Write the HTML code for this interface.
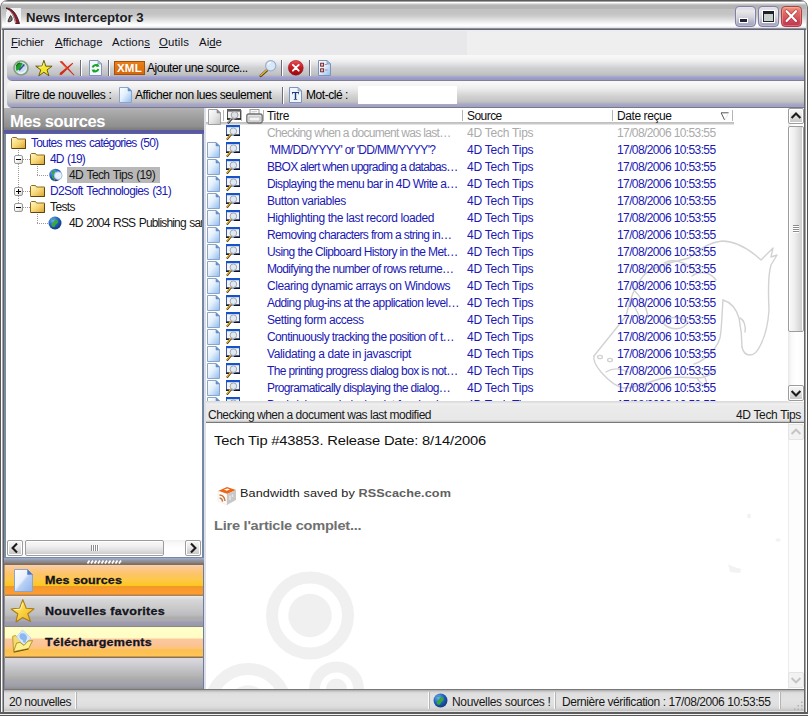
<!DOCTYPE html>
<html><head><meta charset="utf-8">
<style>
*{box-sizing:border-box;margin:0;padding:0}
html,body{width:808px;height:716px;overflow:hidden;background:#ffffff;font-family:"Liberation Sans",sans-serif;font-size:12px;color:#000}
.a{position:absolute}
.t{position:absolute;white-space:nowrap;line-height:14px}
.i{position:absolute;overflow:visible}
#win{position:absolute;left:0;top:0;width:808px;height:716px;overflow:hidden;background:#ececec;border-radius:7px 7px 0 0}
#title{left:0;top:0;width:808px;height:31px;border-radius:7px 7px 0 0;border-left:1px solid #6a6a6a;border-right:1px solid #6a6a6a;box-shadow:inset 1px 0 0 #c8c8c8,inset -1px 0 0 #c8c8c8;
 background:linear-gradient(#5c5c5c 0,#5c5c5c 1px,#a0a0a0 1.5px,#ffffff 2.5px,#e0e0e0 3.5px,#c4c4c4 4.5px,#b4b4b4 5.5px,#b4b4b4 8.5px,#c2c2c2 9.5px,#c4c4c4 14px,#cccccc 16px,#dcdcdc 19px,#eeeeee 22px,#fafafa 24px,#ffffff 26px,#e4e4ea 27.5px,#a0a0a8 28.3px,#66666e 29px,#66666e 30px,#ececfa 30px)}
#menubar{left:4px;top:30px;width:800px;height:25px;background:linear-gradient(#ececfa 0,#efefef 2px,#efefef 100%)}
#menul{left:5px;top:31px;width:462px;height:24px;background:#e8e8ea}
.tb{left:7px;width:797px;border-radius:5px 0 0 5px}
#tb1{top:55px;height:26px;background:linear-gradient(#f8f8f8 0,#f6f6f6 3px,#eeeeee 6px,#e2e2e6 9px,#d8d8e0 11px,#d0d0c8 13px,#c8c8d4 16px,#c0c4bc 19px,#b8b8c0 20.5px,#a8a8d0 21.5px,#9c9cc8 23px,#9898c4 25px,#808090 25.5px,#808090 26px)}
#tb2{top:81px;height:27px;background:linear-gradient(#f8f8f8 0,#f6f6f6 3px,#eeeeee 7px,#e0e0e0 11px,#d2d2d2 15px,#c8c8c8 19px,#c0c0c4 21px,#b0b0c8 22.5px,#a4a4c4 24px,#a0a0c0 26px,#787888 26.3px,#787888 27px)}
.menu{top:35px;font-size:11.4px;color:#101020}
u{text-decoration:underline}
.sep{position:absolute;width:2px;height:16px;top:60px;background:linear-gradient(90deg,#6c6c80 0,#6c6c80 1px,#fff 1px)}
.bl{left:0;top:30px;width:4px;height:686px;background:linear-gradient(90deg,#5a5856 0,#5a5856 1px,#ffffff 1px,#ffffff 2px,#a6a6b0 2px,#a6a6b0 3px,#606068 3px)}
.br{left:804px;top:30px;width:4px;height:686px;background:linear-gradient(90deg,#666666 0,#666666 1px,#a8a8a8 1px,#a8a8a8 2px,#ffffff 2px,#ffffff 3px,#505050 3px)}
.bb{left:0;top:712px;width:808px;height:4px;background:linear-gradient(#5c5c5c 0,#5c5c5c 2px,#f4f4f4 2px,#f4f4f4 3px,#585858 3px)}
#lhead{left:4px;top:108px;width:200px;height:26px;background:linear-gradient(#b4b4b8 0,#aaaaaa 4px,#9a9a9a 12px,#8e8e8e 19px,#828282 20px,#808080 21.5px,#5a5aa0 22px,#5858a0 24px,#6060a8 26px)}
#tree{left:4px;top:134px;width:200px;height:424px;background:#fff;border:2px solid #7488a4;border-top:none;border-left-color:#7c8c98;border-bottom-width:1px;overflow:hidden}
#tree .t{color:#2018b4}
#tree .k{color:#181818}
.dv{position:absolute;width:1px;background:repeating-linear-gradient(#9a9a9a 0,#9a9a9a 1px,transparent 1px,transparent 2px)}
.dh{position:absolute;height:1px;background:repeating-linear-gradient(90deg,#9a9a9a 0,#9a9a9a 1px,transparent 1px,transparent 2px)}
#split{left:4px;top:558px;width:200px;height:7px;background:linear-gradient(#a0acc8 0,#98a0b8 1.5px,#9094a4 2.5px,#8c8c94 3.5px,#888484 4.5px,#847468 5.5px,#806858 7px)}
.nav{left:4px;width:200px;height:31px;border-right:1px solid #6c7c9c;border-left:1px solid #a89870}
#nav1{top:565px;background:linear-gradient(#f4d4b4 0,#f8cca0 1.5px,#fcc888 4px,#fcc468 9px,#fec850 14px,#fcc830 18px,#fcc820 20.5px,#f09828 21.5px,#f89a2c 24px,#ff9c30 29px,#b08050 30px,#a08868 31px)}
#nav2{top:596px;background:linear-gradient(#f0ece4 0,#e2e2e2 1.5px,#d6d6da 4px,#cecece 9px,#c4c4c6 15px,#bcbcc0 19px,#adadad 21.5px,#acacb0 24.5px,#a09cb4 26px,#9898a8 30px,#888888 30.5px)}
#nav3{top:627px;background:linear-gradient(#fffcc0 0,#ffffc8 2px,#fffcc4 11px,#fcc8a0 12px,#fcc498 17px,#fcc478 21.5px,#fcc050 23px,#ffc458 29px,#907040 30px,#807060 31px)}
#nav4{top:658px;height:31px;background:linear-gradient(#dcd8e0 0,#d4d4d8 4px,#c6c6ca 10px,#b6b6b6 17px,#a9a9a9 22px,#a2a2b0 26px,#9a9aa0 29px,#8c8c8c 31px)}
.navt{font-weight:bold;font-size:11.5px;color:#141420;left:45px;-webkit-text-stroke:0.3px #141420}
#list{left:204px;top:108px;width:600px;height:294px;background:#fff;border-left:2px solid #dcdfea;overflow:hidden}
#lh{position:absolute;left:0;top:0;width:528px;height:17px;background:linear-gradient(#fff 0,#fff 14.5px,#c0c0c0 14.5px,#c8c8c8 15.5px,#e4e4e4 16.5px,#fff 17px)}
#lh .t{top:1px;color:#101010}
#pvh{left:206px;top:401px;width:598px;height:22px;background:linear-gradient(#d8d8d8 0,#e2e2e2 1.5px,#f0f0f0 3px,#ebebeb 5px,#e8e8e8 19px,#c8c8c8 20.5px,#787878 21px,#787878 22px)}
#pv{left:204px;top:423px;width:600px;height:266px;background:#fff;border-left:2px solid #dcdfea;overflow:hidden}
#status{left:4px;top:689px;width:800px;height:23px;background:linear-gradient(#787878 0,#787878 1px,#b4b4b4 1.5px,#c8c8c8 2.5px,#d8d8d8 3.5px,#e0e0e0 5px,#e2e2e2 12px,#dedede 17px,#d4d4d4 19.5px,#c4c4c4 21.5px,#e4e4e4 22.5px)}
.row{position:absolute;left:0;height:17px;width:530px;color:#2018b4}
.row.rd{color:#aaaaaa}
.row span{position:absolute;top:1px;line-height:14px;white-space:nowrap}
.row .c1{left:61px}.row .c2{left:261px}.row .c3{left:411px}
.wb{position:absolute;top:6px;width:21px;height:21px;border-radius:4px;border:1px solid #8080a8;background:linear-gradient(#d8d8e0 0,#e8e8ec 4px,#d4d4dc 10px,#b4b4c8 15px,#9c9cbc 20px);box-shadow:inset 0 0 0 1px rgba(255,255,255,.25)}
.wc{border-color:#b04048;background:linear-gradient(#f0a088 0,#e47468 4px,#d8585c 10px,#cc4458 15px,#c03054 20px);box-shadow:inset 0 0 0 1px rgba(255,200,180,.35)}
.cs{position:absolute;top:2px;width:1px;height:11px;background:#b4b4b4}
.sb{position:absolute;width:16px;height:16px;border:1px solid #9c9c9c;border-radius:2px;background:linear-gradient(#fff 0,#fff 1px,#f4f4f4 1px,#ececec 5px,#d4d4d4 10px,#c8c8c8 13px,#fff 13px);box-shadow:inset 1px 0 0 #fff,inset -1px 0 0 #fff}
.sb svg{display:block}
.sd{border-color:#e4e4e4;background:#f2f2f2;box-shadow:none}
.ss{position:absolute;top:692px;width:2px;height:17px;background:linear-gradient(90deg,#fafafa 0,#fafafa 1px,#b4b4b4 1px)}
.eb{position:absolute;width:9px;height:9px;border:1px solid #989898;border-radius:2px;background:linear-gradient(135deg,#fff 0,#fff 40%,#d4d4d0 100%)}
.eb i{position:absolute;left:1px;top:3px;width:5px;height:1px;background:#000}
.eb b{position:absolute;left:3px;top:1px;width:1px;height:5px;background:#000}
#tree .t{word-spacing:1px}
#nav2,#nav4{border-left-color:#8c8c90}
.navt,#p1,#p2,#p3{transform:scaleX(1.09);transform-origin:0 0}

#ttl{letter-spacing:-0.028px}
#m1{letter-spacing:-0.172px}
#m2{letter-spacing:0.021px}
#m3{letter-spacing:0.089px}
#m4{letter-spacing:0.143px}
#m5{letter-spacing:0.043px}
#xml{letter-spacing:0.208px}
#ajout{letter-spacing:-0.478px}
#filtre{letter-spacing:-0.365px}
#affich{letter-spacing:-0.429px}
#motcle{letter-spacing:-0.446px}
#mes{letter-spacing:-0.452px}
#tr0{letter-spacing:-0.786px}
#tr1{letter-spacing:-0.859px}
#tr2{letter-spacing:-0.637px}
#tr3{letter-spacing:-0.647px}
#tr4{letter-spacing:-0.603px}
#tr5{letter-spacing:-0.831px}
#n1{letter-spacing:0.087px}
#n2{letter-spacing:0.243px}
#n3{letter-spacing:0.237px}
#h1{letter-spacing:-0.312px}
#h2{letter-spacing:-0.555px}
#h3{letter-spacing:-0.420px}
#pvt{letter-spacing:-0.487px}
#pvs{letter-spacing:-0.346px}
#p1{letter-spacing:-0.160px}
#p2{letter-spacing:0.090px}
#p3{letter-spacing:-0.229px}
#s1{letter-spacing:-0.449px}
#s2{letter-spacing:-0.327px}
#s3{letter-spacing:-0.424px}
.row .c2{letter-spacing:-0.230px}
.row .c3{letter-spacing:-0.611px}

</style></head><body>
<svg width="0" height="0" style="position:absolute">
<defs>
<linearGradient id="gdoc" x1="0" y1="0" x2="1" y2="1"><stop offset="0" stop-color="#ffffff"/><stop offset="0.45" stop-color="#e4f0fc"/><stop offset="1" stop-color="#8cbcf0"/></linearGradient>
<linearGradient id="gdocg" x1="0" y1="0" x2="1" y2="1"><stop offset="0" stop-color="#ffffff"/><stop offset="0.5" stop-color="#e8e8e8"/><stop offset="1" stop-color="#c0c0c0"/></linearGradient>
<linearGradient id="gfold" x1="0" y1="0" x2="1" y2="1"><stop offset="0" stop-color="#fff8c8"/><stop offset="0.5" stop-color="#f8d878"/><stop offset="1" stop-color="#d8a030"/></linearGradient>
<radialGradient id="gglobe" cx="0.35" cy="0.3" r="0.8"><stop offset="0" stop-color="#70b0f0"/><stop offset="0.5" stop-color="#2060c0"/><stop offset="1" stop-color="#103070"/></radialGradient>
</defs></svg>

<div id="win">
<div id="title" class="a"></div>
<div class="t" id="ttl" style="left:26px;top:10px;font-size:13.2px;line-height:16px;color:#1c1c24;font-weight:bold">News Interceptor 3</div>
<div id="menubar" class="a"></div><div id="menul" class="a"></div>
<div class="t menu" id="m1" style="left:11px"><u>F</u>ichier</div>
<div class="t menu" id="m2" style="left:55px"><u>A</u>ffichage</div>
<div class="t menu" id="m3" style="left:112px">Action<u>s</u></div>
<div class="t menu" id="m4" style="left:159px"><u>O</u>utils</div>
<div class="t menu" id="m5" style="left:199px">Ai<u>d</u>e</div>
<div id="tb1" class="a tb"></div>
<div id="tb2" class="a tb"></div>
<div class="sep" style="left:80px"></div><div class="sep" style="left:108px"></div><div class="sep" style="left:281px"></div><div class="sep" style="left:309px"></div>
<div class="a" style="left:114px;top:61px;width:31px;height:14px;background:linear-gradient(#e88018,#d86808);border:1px solid #a85008"></div>
<div class="t" id="xml" style="left:117px;top:61px;font-size:11.5px;font-weight:bold;color:#fff;letter-spacing:0.2px">XML</div>
<div class="t" id="ajout" style="left:147px;top:61px">Ajouter une source...</div>
<div class="t" id="filtre" style="left:15px;top:88px">Filtre de nouvelles :</div>
<svg class="i" style="left:119px;top:87px" width="13" height="16" viewBox="0 0 13 16"><path d="M0.5,0.5H9L12.5,4V15.5H0.5Z" fill="url(#gdoc)" stroke="#8ca4c8"/><path d="M9,0.5V4H12.5Z" fill="#5c8cd4" stroke="#6c90c8" stroke-width="0.6"/></svg>
<div class="t" id="affich" style="left:135px;top:88px">Afficher non lues seulement</div>
<div class="sep" style="left:282px;top:87px;height:17px"></div>
<div class="t" id="motcle" style="left:306px;top:88px">Mot-clé :</div>
<div class="a" style="left:358px;top:86px;width:99px;height:18px;background:#fff"></div>

<!-- toolbar icons -->
<svg class="i" style="left:13px;top:60px" width="16" height="16" viewBox="0 0 16 16">
 <circle cx="8" cy="8" r="7" fill="#dfe9df" stroke="#84a088" stroke-width="1.7"/>
 <circle cx="8" cy="8" r="5.2" fill="#c8dcf2"/>
 <path d="M8,2.8A5.2,5.2 0 0 0 3.6,11 L7.4,8.4 L9.6,3.1Z" fill="#1ca024"/>
 <path d="M3.4,6.4A5,5 0 0 1 7.2,2.9" stroke="#0c7014" stroke-width="1.3" fill="none"/>
 <path d="M6.2,10.2L10.8,5" stroke="#34488c" stroke-width="1.5"/><path d="M9.2,4.6L11.6,4.2L11.2,6.6Z" fill="#34488c"/>
 <path d="M5.4,12.4A5.2,5.2 0 0 0 12.8,9.6" stroke="#eef4fc" stroke-width="1.3" fill="none"/>
</svg>
<svg class="i" style="left:35px;top:59px" width="18" height="18" viewBox="35 59 18 18">
 <path d="M43.9,60.3L45.8,66.2L52.1,66.2L47.0,69.9L49.0,75.9L43.9,72.2L38.8,75.9L40.8,69.9L35.7,66.2L42.0,66.2Z" fill="#f4e630" stroke="#6c5c08" stroke-width="1" stroke-linejoin="round"/>
 <path d="M43.8,63.2L42.6,66.9L38.8,67.1" fill="none" stroke="#fcfcb0" stroke-width="0.8"/></svg>
<svg class="i" style="left:58px;top:60px" width="18" height="17" viewBox="0 0 18 17">
 <path d="M1.5,1.5L4,1L16.5,15L15.8,15.6Z" fill="#d42c14"/>
 <path d="M14.5,2.8L15.2,3.6L3.5,15L1.5,14.8L2,12.8Z" fill="#d42c14"/>
 <path d="M2.5,2L9,8.5" stroke="#f07030" stroke-width="0.8"/>
</svg>
<svg class="i" style="left:89px;top:60px" width="13" height="16" viewBox="0 0 13 16">
 <path d="M0.5,0.5H9L12.5,4V15.5H0.5Z" fill="#f4f8fc" stroke="#8494b4"/><path d="M9,0.5V4H12.5Z" fill="#b8c8e4" stroke="#8494b4" stroke-width="0.7"/>
 <path d="M9.2,6A3.4,3.4 0 0 0 3.6,7.6" stroke="#18a428" stroke-width="2" fill="none"/><path d="M8,3.4L10.6,6.6L7,6.8Z" fill="#18a428"/>
 <path d="M3.8,10.4A3.4,3.4 0 0 0 9.4,9" stroke="#18a428" stroke-width="2" fill="none"/><path d="M5,13L2.4,9.8L6,9.6Z" fill="#18a428"/>
</svg>
<svg class="i" style="left:259px;top:59px" width="18" height="18" viewBox="259 59 18 18">
 <path d="M267,70.2L260.8,75.8" stroke="#5c4818" stroke-width="2.6" stroke-linecap="round"/>
 <path d="M267,69.8L260.8,75.2" stroke="#e4b038" stroke-width="1.5" stroke-linecap="round"/>
 <circle cx="270.7" cy="65.8" r="5.1" fill="#d8e8f8" stroke="#9cb0cc" stroke-width="1.2"/>
 <path d="M267.8,64.6A3.2,3.2 0 0 1 271,62.4" stroke="#fff" stroke-width="1.2" fill="none"/>
</svg>
<svg class="i" style="left:288px;top:60px" width="16" height="16" viewBox="0 0 16 16">
 <defs><linearGradient id="gstop" x1="0" y1="0" x2="0" y2="1"><stop offset="0" stop-color="#ec5058"/><stop offset="0.5" stop-color="#c81820"/><stop offset="1" stop-color="#98080c"/></linearGradient></defs>
 <circle cx="7.8" cy="7.8" r="7.4" fill="url(#gstop)" stroke="#8c1418" stroke-width="0.6"/>
 <path d="M4.9,4.9L10.7,10.7M10.7,4.9L4.9,10.7" stroke="#fff" stroke-width="1.9" stroke-linecap="round"/>
</svg>
<svg class="i" style="left:318px;top:60px" width="13" height="16" viewBox="0 0 13 16">
 <path d="M0.5,0.5H9L12.5,4V15.5H0.5Z" fill="url(#gdoc)" stroke="#7c94b8"/><path d="M9,0.5V4H12.5Z" fill="#a8c4ec" stroke="#7c94b8" stroke-width="0.7"/>
 <rect x="2.6" y="3.2" width="3" height="3" fill="#e0c0c4" stroke="#702028" stroke-width="0.9"/><rect x="2.6" y="8.8" width="3" height="3" fill="#e0c0c4" stroke="#702028" stroke-width="0.9"/>
 <path d="M6.8,4.5H9M6.8,10H9.6" stroke="#c08890" stroke-width="1.2"/>
</svg>
<!-- T icon -->
<svg class="i" style="left:289px;top:87px" width="13" height="16" viewBox="0 0 13 16">
 <path d="M0.5,0.5H9L12.5,4V15.5H0.5Z" fill="#f0f6fc" stroke="#7c94b8"/><path d="M9,0.5V4H12.5Z" fill="#b8cce8" stroke="#7c94b8" stroke-width="0.7"/>
 <path d="M3,5H10V7.2H9.3V6H7.2V12H8.2V12.8H4.8V12H5.8V6H3.7V7.2H3Z" fill="#1c3c84"/>
</svg>
<!-- app icon -->
<svg class="i" style="left:5px;top:7px" width="17" height="17" viewBox="0 0 17 17">
 <path d="M3,1H16V16H1V6Z" fill="#fafafa" opacity="0.85"/>
 <path d="M1,1C7,1 11.5,6 14.5,16.5H10.6C9.6,10 6.5,3.6 1,1Z" fill="#8c1c2c" stroke="#280c10" stroke-width="0.8"/>
 <path d="M4,3.6C7.5,5.8 9.6,10 10.8,16" stroke="#e8d8d8" stroke-width="0.7" fill="none"/>
 <path d="M3,14.6C3.4,12 4.6,10.4 5.6,8.6C6.4,9.6 7.6,11 7,13C6.4,14.6 4.6,15 3,14.6Z" fill="#787070" stroke="#282424" stroke-width="0.9"/>
</svg>
<!-- window buttons -->
<div class="wb" style="left:735px"></div><div class="wb" style="left:758px"></div>
<div class="wb wc" style="left:781px"></div>
<div class="a" style="left:739px;top:18px;width:9px;height:5px;background:#fff"></div><div class="a" style="left:740px;top:19px;width:7px;height:3px;background:#20203c"></div>
<div class="a" style="left:762px;top:10px;width:13px;height:13px;background:#fff"></div><div class="a" style="left:763px;top:11px;width:11px;height:11px;background:#c8d0cc;border:1px solid #20202c;border-top-width:3px"></div>
<svg class="i" style="left:781px;top:6px" width="21" height="21" viewBox="0 0 21 21"><path d="M5.6,5.2L15,15M15,5.2L5.6,15" stroke="#8c2030" stroke-opacity="0.55" stroke-width="3.6" stroke-linecap="round"/><path d="M5.6,5.2L15,15M15,5.2L5.6,15" stroke="#fff" stroke-width="2.2" stroke-linecap="round"/></svg>

<div id="lhead" class="a"></div>
<div class="t" id="mes" style="left:10px;top:112px;font-size:16.5px;line-height:19px;font-weight:bold;color:#fff">Mes sources</div>
<div id="tree" class="a">
 <svg class="i" style="left:5px;top:3px" width="15" height="12" viewBox="0 0 15 12"><path d="M0.5,11.5V1.5L1.5,0.5H5.5L6.5,2H14.5V11.5Z" fill="url(#gfold)" stroke="#8c6a20"/><path d="M1,11.5H14.5V3" stroke="#5c4410" stroke-width="1" fill="none"/></svg>
 <div class="t" id="tr0" style="left:25px;top:2px">Toutes mes catégories (50)</div>
 <div class="dv" style="left:12px;top:16px;height:58px"></div>
 <div class="dh" style="left:17px;top:25px;width:7px"></div>
 <div class="dh" style="left:17px;top:57px;width:7px"></div>
 <div class="dh" style="left:17px;top:73px;width:7px"></div>
 <div class="dv" style="left:31px;top:32px;height:10px"></div><div class="dh" style="left:31px;top:41px;width:12px"></div>
 <div class="dv" style="left:31px;top:80px;height:10px"></div><div class="dh" style="left:31px;top:89px;width:12px"></div>

 <div class="eb" style="left:8px;top:21px"><i></i></div>
 <div class="eb" style="left:8px;top:53px"><i></i><b></b></div>
 <div class="eb" style="left:8px;top:69px"><i></i></div>
 <svg class="i" style="left:24px;top:19px" width="15" height="12" viewBox="0 0 15 12"><path d="M0.5,11.5V1.5L1.5,0.5H5.5L6.5,2H14.5V11.5Z" fill="url(#gfold)" stroke="#8c6a20"/><path d="M1,11.5H14.5V3" stroke="#5c4410" stroke-width="1" fill="none"/></svg>
 <div class="t" id="tr1" style="left:44px;top:18px">4D (19)</div>
 <svg class="i" style="left:43px;top:34px" width="14" height="14" viewBox="0 0 14 14"><circle cx="6.5" cy="7" r="6.2" fill="url(#gglobe)"/><path d="M2.5,3.5C4.5,2 6.5,3 6,5C5.5,7 3.5,6.5 3,8.5C2.5,10 4,11.5 5.5,11" fill="#38a838"/><circle cx="9.2" cy="7.6" r="3.9" fill="#e4f0fc" stroke="#a8c0e0" stroke-width="1"/><path d="M6.4,10.6L4.4,13" stroke="#708090" stroke-width="1.4"/></svg>
 <div class="a" style="left:61px;top:33px;width:93px;height:16px;background:#b8b8b8"></div>
 <div class="t k" id="tr2" style="left:63px;top:34px">4D Tech Tips (19)</div>
 <svg class="i" style="left:24px;top:51px" width="15" height="12" viewBox="0 0 15 12"><path d="M0.5,11.5V1.5L1.5,0.5H5.5L6.5,2H14.5V11.5Z" fill="url(#gfold)" stroke="#8c6a20"/><path d="M1,11.5H14.5V3" stroke="#5c4410" stroke-width="1" fill="none"/></svg>
 <div class="t" id="tr3" style="left:44px;top:50px">D2Soft Technologies (31)</div>
 <svg class="i" style="left:24px;top:67px" width="15" height="12" viewBox="0 0 15 12"><path d="M0.5,11.5V1.5L1.5,0.5H5.5L6.5,2H14.5V11.5Z" fill="url(#gfold)" stroke="#8c6a20"/><path d="M1,11.5H14.5V3" stroke="#5c4410" stroke-width="1" fill="none"/></svg>
 <div class="t k" id="tr4" style="left:44px;top:66px">Tests</div>
 <svg class="i" style="left:42px;top:82px" width="14" height="14" viewBox="0 0 14 14"><circle cx="7" cy="7" r="6.5" fill="url(#gglobe)"/><path d="M3,3.5C5,2 7,3 6.5,5C6,7 4,6.5 3.5,8.5C3,10 4.5,11.5 6,11C7.5,10.5 7,8.5 8.5,8C10,7.5 10.5,5.5 9.5,4" fill="#38a838" stroke="none"/></svg>
 <div class="t k" id="tr5" style="left:63px;top:82px">4D 2004 RSS Publishing sample</div>
</div>
<div id="split" class="a"></div>
<div id="nav1" class="a nav"></div>
<div id="nav2" class="a nav"></div>
<div id="nav3" class="a nav"></div>
<div id="nav4" class="a nav"></div>
<div class="t navt" id="n1" style="top:573px">Mes sources</div>
<div class="t navt" id="n2" style="top:604px">Nouvelles favorites</div>
<div class="t navt" id="n3" style="top:635px">Téléchargements</div>

<div id="list" class="a">
 <div id="lh">
  <svg class="i" style="left:2px;top:1px" width="13" height="16" viewBox="0 0 13 16"><path d="M0.5,0.5H9L12.5,4V15.5H0.5Z" fill="url(#gdocg)" stroke="#a0a0a0"/><path d="M9,0.5V4H12.5Z" fill="#909090" stroke="#888" stroke-width="0.6"/></svg>
  <svg class="i" style="left:21px;top:1px" width="15" height="16" viewBox="0 0 15 16"><rect x="0.5" y="0.5" width="13" height="9.5" fill="#eeeeee" stroke="#505050"/><rect x="0" y="0" width="14" height="2.6" fill="#606060"/><path d="M0,10H3.5M7.5,10H14" stroke="#202020" stroke-width="1.6"/><circle cx="7.6" cy="6" r="3.4" fill="#e0e0e4" stroke="#a0a0a8" stroke-width="1"/><path d="M4.8,9.6L0.8,14.4" stroke="#303030" stroke-width="2.2"/><path d="M4.6,9.2L0.8,13.6" stroke="#b0b0b0" stroke-width="1.2"/></svg>

  <svg class="i" style="left:40px;top:1px" width="17" height="15" viewBox="0 0 17 15">
   <rect x="4" y="0.5" width="9" height="6" fill="#fafafa" stroke="#9c9c9c"/><path d="M5.5,2.5H11M5.5,4.2H9" stroke="#c8c8c8" stroke-width="0.8"/>
   <rect x="0.8" y="5" width="15.4" height="9" rx="2" fill="#e4e4e4" stroke="#707070" stroke-width="1.3"/><rect x="3" y="8" width="11" height="4" fill="#f4f4f4" stroke="#b0b0b0" stroke-width="0.8"/>
  </svg>
  <div class="cs" style="left:17px"></div><div class="cs" style="left:35px"></div><div class="cs" style="left:57px"></div>
  <div class="cs" style="left:256px"></div><div class="cs" style="left:406px"></div><div class="cs" style="left:526px"></div>
  <svg class="i" style="left:514px;top:4px" width="10" height="9" viewBox="0 0 10 9"><path d="M1,0.8H8.6" stroke="#585858" stroke-width="1"/><path d="M1.2,1L4.6,8" stroke="#585858" stroke-width="1"/><path d="M8.4,1.2L5,8" stroke="#e8e8e8" stroke-width="1"/></svg>
  <div class="t" id="h1" style="left:61px">Titre</div>
  <div class="t" id="h2" style="left:261px">Source</div>
  <div class="t" id="h3" style="left:411px">Date reçue</div>
 </div>

 <svg class="i" style="left:0;top:0" width="598" height="294" viewBox="206 108 598 294" fill="none" stroke="#d2d2d2" stroke-width="1.4" stroke-linecap="round" stroke-linejoin="round">
  <path d="M594,356C600,348 615,330 626,316C630,300 634,286 645,274C655,266 672,262 689,258C700,248 712,242 722,241C734,241 748,248 761,260L773,248L771,257L777,255L771,265C768,275 768,290 769,310C768,325 765,336 761,344C758,351 754,355 750,355C746,355 743,352 742,347"/>
  <path d="M594,356C593,360 596,366 601,372C608,380 616,387 624,388C634,388 645,384 656,380C668,376 684,377 697,378C706,378 712,374 716,369"/>
  <path d="M723,300C730,302 736,308 739,318C741,328 742,338 742,347"/>
  <path d="M723,300C722,312 722,326 720,338C716,350 706,360 694,364"/>
  <path d="M664,263C672,258 684,262 693,268"/><path d="M692,276C700,270 710,272 716,280"/>
  <path d="M662,322C668,316 680,316 688,322C684,330 670,332 662,322Z"/>
  <path d="M634,290C640,296 646,306 648,316"/><path d="M628,300C634,304 638,312 640,320"/>
  <ellipse cx="600" cy="357" rx="2.4" ry="1.6"/><ellipse cx="610" cy="360" rx="2.4" ry="1.6"/>
  <path d="M606,372C612,368 620,368 628,372"/>
  <path d="M700,372C704,376 708,380 706,386C702,384 698,380 697,378"/>
  <path d="M740,318C744,320 746,326 745,332"/>
 </svg>
<div class="row rd" style="top:17px"><svg class="i" style="left:20px;top:0" width="15" height="16" viewBox="0 0 15 16"><rect x="0.5" y="0.5" width="13" height="9.5" fill="#f2f4f6" stroke="#3c58a4"/><rect x="0" y="0" width="14" height="2.2" fill="#1454c8"/><path d="M0,10.2H3.2M7.8,10.2H14" stroke="#101828" stroke-width="1.4"/><circle cx="7.4" cy="6.2" r="3.3" fill="#e0e8f2" stroke="#a0a8b4" stroke-width="1"/><path d="M5,9.4L0.9,14.6" stroke="#4a3a10" stroke-width="2"/><path d="M4.8,9.2L0.9,13.9" stroke="#f0b828" stroke-width="1.2"/></svg><span class="c1" id="r0" style="left:61px;letter-spacing:-0.685px">Checking when a document was last…</span><span class="c2">4D Tech Tips</span><span class="c3">17/08/2006 10:53:55</span></div>
<div class="row" style="top:34px"><svg class="i" style="left:1px;top:0" width="13" height="16" viewBox="0 0 13 16"><path d="M0.5,0.5H9L12.5,4V15.5H0.5Z" fill="url(#gdoc)" stroke="#8ca4c8"/><path d="M9,0.5V4H12.5Z" fill="#5c8cd4" stroke="#6c90c8" stroke-width="0.6"/></svg><svg class="i" style="left:20px;top:0" width="15" height="16" viewBox="0 0 15 16"><rect x="0.5" y="0.5" width="13" height="9.5" fill="#f2f4f6" stroke="#3c58a4"/><rect x="0" y="0" width="14" height="2.2" fill="#1454c8"/><path d="M0,10.2H3.2M7.8,10.2H14" stroke="#101828" stroke-width="1.4"/><circle cx="7.4" cy="6.2" r="3.3" fill="#e0e8f2" stroke="#a0a8b4" stroke-width="1"/><path d="M5,9.4L0.9,14.6" stroke="#4a3a10" stroke-width="2"/><path d="M4.8,9.2L0.9,13.9" stroke="#f0b828" stroke-width="1.2"/></svg><span class="c1" id="r1" style="left:63.5px;letter-spacing:-0.669px">'MM/DD/YYYY' or 'DD/MM/YYYY'?</span><span class="c2">4D Tech Tips</span><span class="c3">17/08/2006 10:53:55</span></div>
<div class="row" style="top:51px"><svg class="i" style="left:1px;top:0" width="13" height="16" viewBox="0 0 13 16"><path d="M0.5,0.5H9L12.5,4V15.5H0.5Z" fill="url(#gdoc)" stroke="#8ca4c8"/><path d="M9,0.5V4H12.5Z" fill="#5c8cd4" stroke="#6c90c8" stroke-width="0.6"/></svg><svg class="i" style="left:20px;top:0" width="15" height="16" viewBox="0 0 15 16"><rect x="0.5" y="0.5" width="13" height="9.5" fill="#f2f4f6" stroke="#3c58a4"/><rect x="0" y="0" width="14" height="2.2" fill="#1454c8"/><path d="M0,10.2H3.2M7.8,10.2H14" stroke="#101828" stroke-width="1.4"/><circle cx="7.4" cy="6.2" r="3.3" fill="#e0e8f2" stroke="#a0a8b4" stroke-width="1"/><path d="M5,9.4L0.9,14.6" stroke="#4a3a10" stroke-width="2"/><path d="M4.8,9.2L0.9,13.9" stroke="#f0b828" stroke-width="1.2"/></svg><span class="c1" id="r2" style="left:61px;letter-spacing:-0.728px">BBOX alert when upgrading a databas…</span><span class="c2">4D Tech Tips</span><span class="c3">17/08/2006 10:53:55</span></div>
<div class="row" style="top:68px"><svg class="i" style="left:1px;top:0" width="13" height="16" viewBox="0 0 13 16"><path d="M0.5,0.5H9L12.5,4V15.5H0.5Z" fill="url(#gdoc)" stroke="#8ca4c8"/><path d="M9,0.5V4H12.5Z" fill="#5c8cd4" stroke="#6c90c8" stroke-width="0.6"/></svg><svg class="i" style="left:20px;top:0" width="15" height="16" viewBox="0 0 15 16"><rect x="0.5" y="0.5" width="13" height="9.5" fill="#f2f4f6" stroke="#3c58a4"/><rect x="0" y="0" width="14" height="2.2" fill="#1454c8"/><path d="M0,10.2H3.2M7.8,10.2H14" stroke="#101828" stroke-width="1.4"/><circle cx="7.4" cy="6.2" r="3.3" fill="#e0e8f2" stroke="#a0a8b4" stroke-width="1"/><path d="M5,9.4L0.9,14.6" stroke="#4a3a10" stroke-width="2"/><path d="M4.8,9.2L0.9,13.9" stroke="#f0b828" stroke-width="1.2"/></svg><span class="c1" id="r3" style="left:61px;letter-spacing:-0.613px">Displaying the menu bar in 4D Write a…</span><span class="c2">4D Tech Tips</span><span class="c3">17/08/2006 10:53:55</span></div>
<div class="row" style="top:85px"><svg class="i" style="left:1px;top:0" width="13" height="16" viewBox="0 0 13 16"><path d="M0.5,0.5H9L12.5,4V15.5H0.5Z" fill="url(#gdoc)" stroke="#8ca4c8"/><path d="M9,0.5V4H12.5Z" fill="#5c8cd4" stroke="#6c90c8" stroke-width="0.6"/></svg><svg class="i" style="left:20px;top:0" width="15" height="16" viewBox="0 0 15 16"><rect x="0.5" y="0.5" width="13" height="9.5" fill="#f2f4f6" stroke="#3c58a4"/><rect x="0" y="0" width="14" height="2.2" fill="#1454c8"/><path d="M0,10.2H3.2M7.8,10.2H14" stroke="#101828" stroke-width="1.4"/><circle cx="7.4" cy="6.2" r="3.3" fill="#e0e8f2" stroke="#a0a8b4" stroke-width="1"/><path d="M5,9.4L0.9,14.6" stroke="#4a3a10" stroke-width="2"/><path d="M4.8,9.2L0.9,13.9" stroke="#f0b828" stroke-width="1.2"/></svg><span class="c1" id="r4" style="left:61px;letter-spacing:-0.460px">Button variables</span><span class="c2">4D Tech Tips</span><span class="c3">17/08/2006 10:53:55</span></div>
<div class="row" style="top:102px"><svg class="i" style="left:1px;top:0" width="13" height="16" viewBox="0 0 13 16"><path d="M0.5,0.5H9L12.5,4V15.5H0.5Z" fill="url(#gdoc)" stroke="#8ca4c8"/><path d="M9,0.5V4H12.5Z" fill="#5c8cd4" stroke="#6c90c8" stroke-width="0.6"/></svg><svg class="i" style="left:20px;top:0" width="15" height="16" viewBox="0 0 15 16"><rect x="0.5" y="0.5" width="13" height="9.5" fill="#f2f4f6" stroke="#3c58a4"/><rect x="0" y="0" width="14" height="2.2" fill="#1454c8"/><path d="M0,10.2H3.2M7.8,10.2H14" stroke="#101828" stroke-width="1.4"/><circle cx="7.4" cy="6.2" r="3.3" fill="#e0e8f2" stroke="#a0a8b4" stroke-width="1"/><path d="M5,9.4L0.9,14.6" stroke="#4a3a10" stroke-width="2"/><path d="M4.8,9.2L0.9,13.9" stroke="#f0b828" stroke-width="1.2"/></svg><span class="c1" id="r5" style="left:61px;letter-spacing:-0.413px">Highlighting the last record loaded</span><span class="c2">4D Tech Tips</span><span class="c3">17/08/2006 10:53:55</span></div>
<div class="row" style="top:119px"><svg class="i" style="left:1px;top:0" width="13" height="16" viewBox="0 0 13 16"><path d="M0.5,0.5H9L12.5,4V15.5H0.5Z" fill="url(#gdoc)" stroke="#8ca4c8"/><path d="M9,0.5V4H12.5Z" fill="#5c8cd4" stroke="#6c90c8" stroke-width="0.6"/></svg><svg class="i" style="left:20px;top:0" width="15" height="16" viewBox="0 0 15 16"><rect x="0.5" y="0.5" width="13" height="9.5" fill="#f2f4f6" stroke="#3c58a4"/><rect x="0" y="0" width="14" height="2.2" fill="#1454c8"/><path d="M0,10.2H3.2M7.8,10.2H14" stroke="#101828" stroke-width="1.4"/><circle cx="7.4" cy="6.2" r="3.3" fill="#e0e8f2" stroke="#a0a8b4" stroke-width="1"/><path d="M5,9.4L0.9,14.6" stroke="#4a3a10" stroke-width="2"/><path d="M4.8,9.2L0.9,13.9" stroke="#f0b828" stroke-width="1.2"/></svg><span class="c1" id="r6" style="left:61px;letter-spacing:-0.640px">Removing characters from a string in…</span><span class="c2">4D Tech Tips</span><span class="c3">17/08/2006 10:53:55</span></div>
<div class="row" style="top:136px"><svg class="i" style="left:1px;top:0" width="13" height="16" viewBox="0 0 13 16"><path d="M0.5,0.5H9L12.5,4V15.5H0.5Z" fill="url(#gdoc)" stroke="#8ca4c8"/><path d="M9,0.5V4H12.5Z" fill="#5c8cd4" stroke="#6c90c8" stroke-width="0.6"/></svg><svg class="i" style="left:20px;top:0" width="15" height="16" viewBox="0 0 15 16"><rect x="0.5" y="0.5" width="13" height="9.5" fill="#f2f4f6" stroke="#3c58a4"/><rect x="0" y="0" width="14" height="2.2" fill="#1454c8"/><path d="M0,10.2H3.2M7.8,10.2H14" stroke="#101828" stroke-width="1.4"/><circle cx="7.4" cy="6.2" r="3.3" fill="#e0e8f2" stroke="#a0a8b4" stroke-width="1"/><path d="M5,9.4L0.9,14.6" stroke="#4a3a10" stroke-width="2"/><path d="M4.8,9.2L0.9,13.9" stroke="#f0b828" stroke-width="1.2"/></svg><span class="c1" id="r7" style="left:61px;letter-spacing:-0.602px">Using the Clipboard History in the Met…</span><span class="c2">4D Tech Tips</span><span class="c3">17/08/2006 10:53:55</span></div>
<div class="row" style="top:153px"><svg class="i" style="left:1px;top:0" width="13" height="16" viewBox="0 0 13 16"><path d="M0.5,0.5H9L12.5,4V15.5H0.5Z" fill="url(#gdoc)" stroke="#8ca4c8"/><path d="M9,0.5V4H12.5Z" fill="#5c8cd4" stroke="#6c90c8" stroke-width="0.6"/></svg><svg class="i" style="left:20px;top:0" width="15" height="16" viewBox="0 0 15 16"><rect x="0.5" y="0.5" width="13" height="9.5" fill="#f2f4f6" stroke="#3c58a4"/><rect x="0" y="0" width="14" height="2.2" fill="#1454c8"/><path d="M0,10.2H3.2M7.8,10.2H14" stroke="#101828" stroke-width="1.4"/><circle cx="7.4" cy="6.2" r="3.3" fill="#e0e8f2" stroke="#a0a8b4" stroke-width="1"/><path d="M5,9.4L0.9,14.6" stroke="#4a3a10" stroke-width="2"/><path d="M4.8,9.2L0.9,13.9" stroke="#f0b828" stroke-width="1.2"/></svg><span class="c1" id="r8" style="left:61px;letter-spacing:-0.659px">Modifying the number of rows returne…</span><span class="c2">4D Tech Tips</span><span class="c3">17/08/2006 10:53:55</span></div>
<div class="row" style="top:170px"><svg class="i" style="left:1px;top:0" width="13" height="16" viewBox="0 0 13 16"><path d="M0.5,0.5H9L12.5,4V15.5H0.5Z" fill="url(#gdoc)" stroke="#8ca4c8"/><path d="M9,0.5V4H12.5Z" fill="#5c8cd4" stroke="#6c90c8" stroke-width="0.6"/></svg><svg class="i" style="left:20px;top:0" width="15" height="16" viewBox="0 0 15 16"><rect x="0.5" y="0.5" width="13" height="9.5" fill="#f2f4f6" stroke="#3c58a4"/><rect x="0" y="0" width="14" height="2.2" fill="#1454c8"/><path d="M0,10.2H3.2M7.8,10.2H14" stroke="#101828" stroke-width="1.4"/><circle cx="7.4" cy="6.2" r="3.3" fill="#e0e8f2" stroke="#a0a8b4" stroke-width="1"/><path d="M5,9.4L0.9,14.6" stroke="#4a3a10" stroke-width="2"/><path d="M4.8,9.2L0.9,13.9" stroke="#f0b828" stroke-width="1.2"/></svg><span class="c1" id="r9" style="left:61px;letter-spacing:-0.443px">Clearing dynamic arrays on Windows</span><span class="c2">4D Tech Tips</span><span class="c3">17/08/2006 10:53:55</span></div>
<div class="row" style="top:187px"><svg class="i" style="left:1px;top:0" width="13" height="16" viewBox="0 0 13 16"><path d="M0.5,0.5H9L12.5,4V15.5H0.5Z" fill="url(#gdoc)" stroke="#8ca4c8"/><path d="M9,0.5V4H12.5Z" fill="#5c8cd4" stroke="#6c90c8" stroke-width="0.6"/></svg><svg class="i" style="left:20px;top:0" width="15" height="16" viewBox="0 0 15 16"><rect x="0.5" y="0.5" width="13" height="9.5" fill="#f2f4f6" stroke="#3c58a4"/><rect x="0" y="0" width="14" height="2.2" fill="#1454c8"/><path d="M0,10.2H3.2M7.8,10.2H14" stroke="#101828" stroke-width="1.4"/><circle cx="7.4" cy="6.2" r="3.3" fill="#e0e8f2" stroke="#a0a8b4" stroke-width="1"/><path d="M5,9.4L0.9,14.6" stroke="#4a3a10" stroke-width="2"/><path d="M4.8,9.2L0.9,13.9" stroke="#f0b828" stroke-width="1.2"/></svg><span class="c1" id="r10" style="left:61px;letter-spacing:-0.605px">Adding plug-ins at the application level…</span><span class="c2">4D Tech Tips</span><span class="c3">17/08/2006 10:53:55</span></div>
<div class="row" style="top:204px"><svg class="i" style="left:1px;top:0" width="13" height="16" viewBox="0 0 13 16"><path d="M0.5,0.5H9L12.5,4V15.5H0.5Z" fill="url(#gdoc)" stroke="#8ca4c8"/><path d="M9,0.5V4H12.5Z" fill="#5c8cd4" stroke="#6c90c8" stroke-width="0.6"/></svg><svg class="i" style="left:20px;top:0" width="15" height="16" viewBox="0 0 15 16"><rect x="0.5" y="0.5" width="13" height="9.5" fill="#f2f4f6" stroke="#3c58a4"/><rect x="0" y="0" width="14" height="2.2" fill="#1454c8"/><path d="M0,10.2H3.2M7.8,10.2H14" stroke="#101828" stroke-width="1.4"/><circle cx="7.4" cy="6.2" r="3.3" fill="#e0e8f2" stroke="#a0a8b4" stroke-width="1"/><path d="M5,9.4L0.9,14.6" stroke="#4a3a10" stroke-width="2"/><path d="M4.8,9.2L0.9,13.9" stroke="#f0b828" stroke-width="1.2"/></svg><span class="c1" id="r11" style="left:61px;letter-spacing:-0.462px">Setting form access</span><span class="c2">4D Tech Tips</span><span class="c3">17/08/2006 10:53:55</span></div>
<div class="row" style="top:221px"><svg class="i" style="left:1px;top:0" width="13" height="16" viewBox="0 0 13 16"><path d="M0.5,0.5H9L12.5,4V15.5H0.5Z" fill="url(#gdoc)" stroke="#8ca4c8"/><path d="M9,0.5V4H12.5Z" fill="#5c8cd4" stroke="#6c90c8" stroke-width="0.6"/></svg><svg class="i" style="left:20px;top:0" width="15" height="16" viewBox="0 0 15 16"><rect x="0.5" y="0.5" width="13" height="9.5" fill="#f2f4f6" stroke="#3c58a4"/><rect x="0" y="0" width="14" height="2.2" fill="#1454c8"/><path d="M0,10.2H3.2M7.8,10.2H14" stroke="#101828" stroke-width="1.4"/><circle cx="7.4" cy="6.2" r="3.3" fill="#e0e8f2" stroke="#a0a8b4" stroke-width="1"/><path d="M5,9.4L0.9,14.6" stroke="#4a3a10" stroke-width="2"/><path d="M4.8,9.2L0.9,13.9" stroke="#f0b828" stroke-width="1.2"/></svg><span class="c1" id="r12" style="left:61px;letter-spacing:-0.611px">Continuously tracking the position of t…</span><span class="c2">4D Tech Tips</span><span class="c3">17/08/2006 10:53:55</span></div>
<div class="row" style="top:238px"><svg class="i" style="left:1px;top:0" width="13" height="16" viewBox="0 0 13 16"><path d="M0.5,0.5H9L12.5,4V15.5H0.5Z" fill="url(#gdoc)" stroke="#8ca4c8"/><path d="M9,0.5V4H12.5Z" fill="#5c8cd4" stroke="#6c90c8" stroke-width="0.6"/></svg><svg class="i" style="left:20px;top:0" width="15" height="16" viewBox="0 0 15 16"><rect x="0.5" y="0.5" width="13" height="9.5" fill="#f2f4f6" stroke="#3c58a4"/><rect x="0" y="0" width="14" height="2.2" fill="#1454c8"/><path d="M0,10.2H3.2M7.8,10.2H14" stroke="#101828" stroke-width="1.4"/><circle cx="7.4" cy="6.2" r="3.3" fill="#e0e8f2" stroke="#a0a8b4" stroke-width="1"/><path d="M5,9.4L0.9,14.6" stroke="#4a3a10" stroke-width="2"/><path d="M4.8,9.2L0.9,13.9" stroke="#f0b828" stroke-width="1.2"/></svg><span class="c1" id="r13" style="left:61px;letter-spacing:-0.361px">Validating a date in javascript</span><span class="c2">4D Tech Tips</span><span class="c3">17/08/2006 10:53:55</span></div>
<div class="row" style="top:255px"><svg class="i" style="left:1px;top:0" width="13" height="16" viewBox="0 0 13 16"><path d="M0.5,0.5H9L12.5,4V15.5H0.5Z" fill="url(#gdoc)" stroke="#8ca4c8"/><path d="M9,0.5V4H12.5Z" fill="#5c8cd4" stroke="#6c90c8" stroke-width="0.6"/></svg><svg class="i" style="left:20px;top:0" width="15" height="16" viewBox="0 0 15 16"><rect x="0.5" y="0.5" width="13" height="9.5" fill="#f2f4f6" stroke="#3c58a4"/><rect x="0" y="0" width="14" height="2.2" fill="#1454c8"/><path d="M0,10.2H3.2M7.8,10.2H14" stroke="#101828" stroke-width="1.4"/><circle cx="7.4" cy="6.2" r="3.3" fill="#e0e8f2" stroke="#a0a8b4" stroke-width="1"/><path d="M5,9.4L0.9,14.6" stroke="#4a3a10" stroke-width="2"/><path d="M4.8,9.2L0.9,13.9" stroke="#f0b828" stroke-width="1.2"/></svg><span class="c1" id="r14" style="left:61px;letter-spacing:-0.621px">The printing progress dialog box is not…</span><span class="c2">4D Tech Tips</span><span class="c3">17/08/2006 10:53:55</span></div>
<div class="row" style="top:272px"><svg class="i" style="left:1px;top:0" width="13" height="16" viewBox="0 0 13 16"><path d="M0.5,0.5H9L12.5,4V15.5H0.5Z" fill="url(#gdoc)" stroke="#8ca4c8"/><path d="M9,0.5V4H12.5Z" fill="#5c8cd4" stroke="#6c90c8" stroke-width="0.6"/></svg><svg class="i" style="left:20px;top:0" width="15" height="16" viewBox="0 0 15 16"><rect x="0.5" y="0.5" width="13" height="9.5" fill="#f2f4f6" stroke="#3c58a4"/><rect x="0" y="0" width="14" height="2.2" fill="#1454c8"/><path d="M0,10.2H3.2M7.8,10.2H14" stroke="#101828" stroke-width="1.4"/><circle cx="7.4" cy="6.2" r="3.3" fill="#e0e8f2" stroke="#a0a8b4" stroke-width="1"/><path d="M5,9.4L0.9,14.6" stroke="#4a3a10" stroke-width="2"/><path d="M4.8,9.2L0.9,13.9" stroke="#f0b828" stroke-width="1.2"/></svg><span class="c1" id="r15" style="left:61px;letter-spacing:-0.621px">Programatically displaying the dialog…</span><span class="c2">4D Tech Tips</span><span class="c3">17/08/2006 10:53:55</span></div>
<div class="row" style="top:289px"><svg class="i" style="left:1px;top:0" width="13" height="16" viewBox="0 0 13 16"><path d="M0.5,0.5H9L12.5,4V15.5H0.5Z" fill="url(#gdoc)" stroke="#8ca4c8"/><path d="M9,0.5V4H12.5Z" fill="#5c8cd4" stroke="#6c90c8" stroke-width="0.6"/></svg><svg class="i" style="left:20px;top:0" width="15" height="16" viewBox="0 0 15 16"><rect x="0.5" y="0.5" width="13" height="9.5" fill="#f2f4f6" stroke="#3c58a4"/><rect x="0" y="0" width="14" height="2.2" fill="#1454c8"/><path d="M0,10.2H3.2M7.8,10.2H14" stroke="#101828" stroke-width="1.4"/><circle cx="7.4" cy="6.2" r="3.3" fill="#e0e8f2" stroke="#a0a8b4" stroke-width="1"/><path d="M5,9.4L0.9,14.6" stroke="#4a3a10" stroke-width="2"/><path d="M4.8,9.2L0.9,13.9" stroke="#f0b828" stroke-width="1.2"/></svg><span class="c1" id="r16" style="left:61px;letter-spacing:-0.513px">Basic 'plug-and-play' script for check…</span><span class="c2">4D Tech Tips</span><span class="c3">17/08/2006 10:53:55</span></div>
</div>
<div class="a" style="left:204px;top:401px;width:2px;height:22px;background:#dcdfea"></div><div id="pvh" class="a"></div>
<div class="t" id="pvt" style="left:208px;top:408px;color:#181818">Checking when a document was last modified</div>
<div class="t" id="pvs" style="left:736px;top:408px;color:#181818">4D Tech Tips</div>
<div id="pv" class="a">

 <svg class="i" style="left:0;top:0" width="598" height="266" viewBox="206 423 598 266">
  <g fill="#f2f2f2"><ellipse cx="749" cy="516" rx="2" ry="2.4"/><ellipse cx="778" cy="540" rx="2.6" ry="1.8"/><path d="M728,564C731,566 734,567 741,569L740,573L730,572Z"/></g><g fill="#f0f0f0"><circle cx="310" cy="615.5" r="21.7"/><circle cx="336.5" cy="689" r="10.5"/><circle cx="248" cy="707" r="21.7"/></g>
  <g fill="none" stroke="#f0f0f0"><circle cx="310" cy="615.5" r="38" stroke-width="12"/><circle cx="248" cy="707" r="38" stroke-width="12"/><circle cx="336.5" cy="689" r="22" stroke-width="11"/></g>
 </svg>
 <div class="t" id="p1" style="left:8px;top:10px;font-size:13.5px;line-height:16px;color:#101010">Tech Tip #43853. Release Date: 8/14/2006</div>
 <div class="t" id="p2" style="left:34px;top:63px;font-size:11.6px;color:#202020">Bandwidth saved by <b style="color:#606060">RSScache.com</b></div>
 <div class="t" id="p3" style="left:8px;top:96px;font-size:13.4px;font-weight:bold;color:#707070">Lire l'article complet...</div>
</div>
<div id="status" class="a"></div>
<div class="t" id="s1" style="left:9px;top:695px;color:#181818">20 nouvelles</div>
<div class="t" id="s2" style="left:452px;top:695px;color:#181818">Nouvelles sources !</div>
<div class="t" id="s3" style="left:562px;top:695px;color:#181818">Dernière vérification : 17/08/2006 10:53:55</div>

<!-- list vscroll -->
<div class="a" style="left:788px;top:108px;width:16px;height:294px;background:linear-gradient(90deg,#e8e8e8 0,#f8f8f8 3px,#ffffff 8px,#fcfcfc 15px)"></div>
<div class="sb" style="left:788px;top:108px"><svg width="14" height="14" viewBox="0 0 14 14"><path d="M2.6,9L7,4.6L11.4,9" stroke="#1c1c1c" stroke-width="2.1" fill="none"/></svg></div>
<div class="sb" style="left:788px;top:385px"><svg width="14" height="14" viewBox="0 0 14 14"><path d="M2.6,5L7,9.4L11.4,5" stroke="#1c1c1c" stroke-width="2.1" fill="none"/></svg></div>

<div class="a" style="left:788px;top:126px;width:16px;height:206px;border:1px solid #9c9c9c;border-radius:2px;background:linear-gradient(90deg,#fff 0,#fff 1px,#f6f6f6 1px,#f0f0f0 5px,#dcdcdc 10px,#cccccc 13px,#fff 13px);"></div>
<div class="a" style="left:793px;top:225px;width:6px;height:8px;background:repeating-linear-gradient(#8c8c8c 0,#8c8c8c 1px,#fff 1px,#fff 2px)"></div>
<!-- preview vscroll (disabled) -->
<div class="a" style="left:788px;top:423px;width:16px;height:266px;background:#fdfdfd;border-left:1px solid #ececec"></div>
<div class="sb sd" style="left:788px;top:424px"><svg width="14" height="14" viewBox="0 0 14 14"><path d="M2.6,9L7,4.6L11.4,9" stroke="#c4c4c4" stroke-width="2" fill="none"/></svg></div>
<div class="sb sd" style="left:788px;top:672px"><svg width="14" height="14" viewBox="0 0 14 14"><path d="M2.6,5L7,9.4L11.4,5" stroke="#c4c4c4" stroke-width="2" fill="none"/></svg></div>
<!-- tree hscroll -->
<div class="a" style="left:6px;top:540px;width:196px;height:16px;background:linear-gradient(#f0f0f0 0,#fafafa 4px,#ffffff 10px,#fcfcfc 16px)"></div>
<div class="sb" style="left:7px;top:540px"><svg width="14" height="14" viewBox="0 0 14 14"><path d="M9,2.6L4.6,7L9,11.4" stroke="#1c1c1c" stroke-width="2.1" fill="none"/></svg></div>
<div class="sb" style="left:185px;top:540px"><svg width="14" height="14" viewBox="0 0 14 14"><path d="M5,2.6L9.4,7L5,11.4" stroke="#1c1c1c" stroke-width="2.1" fill="none"/></svg></div>
<div class="a" style="left:25px;top:540px;width:139px;height:16px;border:1px solid #9c9c9c;border-radius:2px;background:linear-gradient(#fff 0,#fff 1px,#f6f6f6 1px,#f0f0f0 5px,#dcdcdc 10px,#cccccc 13px,#fff 13px)"></div>
<div class="a" style="left:91px;top:545px;width:8px;height:6px;background:repeating-linear-gradient(90deg,#8c8c8c 0,#8c8c8c 1px,#fff 1px,#fff 2px)"></div>
<!-- splitter grip -->
<svg class="i" style="left:86px;top:560px" width="36" height="4" viewBox="0 0 36 4"><path d="M1.5,3.5L3.5,0.5M5,3.5L7,0.5M8.5,3.5L10.5,0.5M12,3.5L14,0.5M15.5,3.5L17.5,0.5M19,3.5L21,0.5M22.5,3.5L24.5,0.5M26,3.5L28,0.5M29.5,3.5L31.5,0.5M33,3.5L35,0.5" stroke="#fff" stroke-width="1.7"/></svg>
<!-- nav icons -->
<svg class="i" style="left:14px;top:569px" width="19" height="23" viewBox="0 0 19 23"><defs><linearGradient id="gdoc2" x1="0" y1="0" x2="1" y2="1"><stop offset="0" stop-color="#fff"/><stop offset="0.45" stop-color="#e8f0fc"/><stop offset="0.55" stop-color="#b8d0f4"/><stop offset="1" stop-color="#90b4ec"/></linearGradient></defs>
 <path d="M0.5,0.5H13.5L18.5,5.5V22.5H0.5Z" fill="url(#gdoc2)" stroke="#90a4c8"/><path d="M13.5,0.5V5.5H18.5Z" fill="#4c78c8" stroke="#6c8cc8" stroke-width="0.7"/></svg>
<svg class="i" style="left:10px;top:598px" width="25" height="26" viewBox="10 598 25 26"><defs><linearGradient id="gstar" x1="0" y1="0" x2="1" y2="1"><stop offset="0" stop-color="#fff08c"/><stop offset="0.45" stop-color="#fcd848"/><stop offset="1" stop-color="#eca81c"/></linearGradient></defs>
 <path d="M22.8,599.6C23.8,602 25.2,605.6 26.2,608.2C28.6,608.3 31.6,608.5 34,608.9C32,610.6 29.8,612.2 27.8,613.7C28.7,616.2 29.7,619 30.5,621.6C28,620.4 25.2,618.8 22.8,617.5C20.4,618.9 18,620.6 16,622C16.4,619.4 17.2,616.4 17.8,613.8C15.6,612.4 13.2,610.6 11.2,609C13.8,608.5 17,608.3 19.6,608.2C20.6,605.6 21.8,602 22.8,599.6Z" fill="url(#gstar)" stroke="#a87c18" stroke-width="1.1" stroke-linejoin="round"/>
 <path d="M22.6,603L20.6,609.2L14.5,609.6" fill="none" stroke="#fff8c0" stroke-width="0.9"/></svg>
<svg class="i" style="left:10px;top:628px" width="26" height="26" viewBox="10 628 26 26">
 <path d="M12.6,636.4L15.6,635.4L17.4,637.4L23,638.4V646L13.6,651.6Z" fill="#f4dc70" stroke="#b89428" stroke-width="0.9" stroke-linejoin="round"/>
 <path d="M22.5,630L31,638L24,645.5L16.5,637Z" fill="#d8eafc" stroke="#b8d0ec" stroke-width="0.8"/>
 <path d="M21,633.5C23.5,632.5 26.5,634 27,637C27.2,639.5 25.5,640.8 25.8,642.5C24,643.5 22.5,642 22.8,640C20.5,639.6 19.2,638 19.5,636C19.8,634.6 20.2,634 21,633.5Z" fill="#8cb8f0"/>
 <path d="M13.6,651.6L16.6,643L20,642.4L24,645.4L28,641L32.6,640.6L28.6,648.6Z" fill="#fcf090" stroke="#b08c20" stroke-width="0.9" stroke-linejoin="round"/>
 <path d="M13.8,652.2L28.6,649" stroke="#6c5410" stroke-width="1"/>
</svg>
<!-- preview: rsscache icon + circles -->
<svg class="i" style="left:217px;top:486px" width="20" height="20" viewBox="0 0 20 20">
 <path d="M1,5L10,1L19,4L10,8Z" fill="#f06414"/><path d="M7,3.6L10.5,2.4L13,3.4L9.6,4.8Z" fill="#fff"/>
 <path d="M1,5L10,8V19L1,15Z" fill="#fcfcfc" stroke="#e8e0dc" stroke-width="0.5"/><path d="M10,8L19,4V14L10,19Z" fill="#c8c8c8"/>
 <path d="M2.5,9C5.5,9 7.5,11 8,15M2.6,12C4.4,12.2 5.4,13.4 5.6,15.6" stroke="#d07030" stroke-width="1.4" fill="none"/>
 <path d="M13,9.5V14M15.5,8.5V11" stroke="#e8e8e8" stroke-width="1.4"/>
</svg>
<!-- status -->
<div class="ss" style="left:75px"></div><div class="ss" style="left:428px"></div><div class="ss" style="left:554px"></div><div class="ss" style="left:779px"></div>
<svg class="i" style="left:433px;top:693px" width="15" height="15" viewBox="0 0 14 14"><circle cx="7" cy="7" r="6.5" fill="url(#gglobe)"/><path d="M3,3.5C5,2 7,3 6.5,5C6,7 4,6.5 3.5,8.5C3,10 4.5,11.5 6,11C7.5,10.5 7,8.5 8.5,8C10,7.5 10.5,5.5 9.5,4" fill="#38a838" stroke="none"/></svg>
<svg class="i" style="left:792px;top:699px" width="11" height="11" viewBox="0 0 11 11"><path d="M9,2.5H10.5V4H9ZM5.5,6H7V7.5H5.5ZM9,6H10.5V7.5H9ZM2,9.5H3.5V11H2ZM5.5,9.5H7V11H5.5ZM9,9.5H10.5V11H9Z" fill="#b0b0b0"/></svg>

<div class="a bl"></div><div class="a br"></div><div class="a bb"></div>
</div>

</body></html>
